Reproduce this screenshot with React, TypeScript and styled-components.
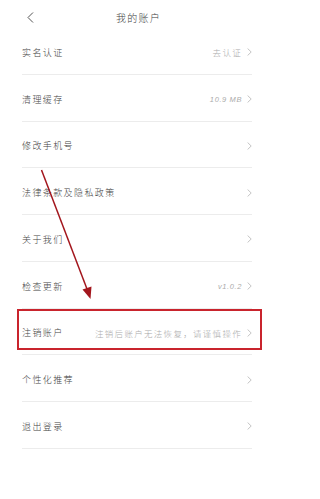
import styled, { createGlobalStyle } from "styled-components";

interface IItem {
  label: string;
  value?: string;
  latin?: boolean;
  highlighted?: boolean;
}

const items: IItem[] = [
  { label: "实名认证", value: "去认证" },
  { label: "清理缓存", value: "10.9 MB", latin: true },
  { label: "修改手机号" },
  { label: "法律条款及隐私政策" },
  { label: "关于我们" },
  { label: "检查更新", value: "v1.0.2", latin: true },
  { label: "注销账户", value: "注销后账户无法恢复，请谨慎操作", highlighted: true },
  { label: "个性化推荐" },
  { label: "退出登录" },
];

export default function App() {
  return (
    <Page>
      <GlobalStyle />
      <Header>
        <BackButton>
          <svg width="7" height="11" viewBox="0 0 7 11">
            <path d="M6 0.5 L1 5.5 L6 10.5" fill="none" stroke="#555" strokeWidth="1" />
          </svg>
        </BackButton>
        <Title>我的账户</Title>
      </Header>
      <List>
        {items.map((item) => (
          <Row key={item.label} $highlighted={item.highlighted}>
            <Label>{item.label}</Label>
            <RightSide>
              {item.value && <Value $latin={item.latin}>{item.value}</Value>}
              <svg width="5" height="8" viewBox="0 0 5 8">
                <path d="M0.6 0.5 L4.2 4 L0.6 7.5" fill="none" stroke="#b5b5b5" strokeWidth="0.8" />
              </svg>
            </RightSide>
          </Row>
        ))}
      </List>
      {/* 标注箭头 */}
      <Arrow width="277" height="499" viewBox="0 0 277 499">
        <line x1="41.5" y1="170" x2="87" y2="289" stroke="#a3161d" strokeWidth="1.5" />
        <polygon points="90.5,299 82.5,289.5 91.5,286.5" fill="#a3161d" />
      </Arrow>
    </Page>
  );
}

const GlobalStyle = createGlobalStyle`
  body {
    margin: 0;
    background: #ffffff;
    font-family: "Noto Sans CJK SC", "Noto Sans", sans-serif;
  }
`;

const Page = styled.div`
  position: relative;
  width: 277px;
  height: 499px;
  background: #ffffff;
  overflow: hidden;
`;

const Header = styled.div`
  position: relative;
  height: 28px;
  display: flex;
  justify-content: center;
  align-items: flex-start;
  padding-top: 8px;
  box-sizing: border-box;
`;

const BackButton = styled.div`
  position: absolute;
  left: 27px;
  top: 12px;
  display: flex;
`;

const Title = styled.span`
  font-size: 10px;
  font-weight: 300;
  line-height: 20px;
  letter-spacing: 1.2px;
  color: #3c3c3c;
`;

const List = styled.div`
  display: flex;
  flex-direction: column;
  padding: 0 25px 0 22px;
`;

const Row = styled.div<{ $highlighted?: boolean }>`
  position: relative;
  height: 46.75px;
  box-sizing: border-box;
  display: flex;
  align-items: center;
  justify-content: space-between;
  border-bottom: 1px solid #ececec;
  padding-top: 3px;

  &::after {
    content: "";
    display: ${(p) => (p.$highlighted ? "block" : "none")};
    position: absolute;
    left: -5px;
    right: -10px;
    top: 0;
    bottom: 4px;
    border: 2px solid #c9242d;
  }
`;

const Label = styled.span`
  font-size: 9px;
  font-weight: 300;
  letter-spacing: 1.4px;
  color: #444;
`;

const RightSide = styled.div`
  display: flex;
  align-items: center;
  gap: 5px;
`;

const Value = styled.span<{ $latin?: boolean }>`
  font-family: ${(p) =>
    p.$latin ? `"Liberation Sans", sans-serif` : `"Noto Sans CJK SC", sans-serif`};
  font-style: ${(p) => (p.$latin ? "italic" : "normal")};
  font-weight: 300;
  font-size: ${(p) => (p.$latin ? "7.5px" : "8.5px")};
  letter-spacing: ${(p) => (p.$latin ? "0.6px" : "1.3px")};
  color: #ababab;
`;

const Arrow = styled.svg`
  position: absolute;
  left: 0;
  top: 0;
  pointer-events: none;
`;
